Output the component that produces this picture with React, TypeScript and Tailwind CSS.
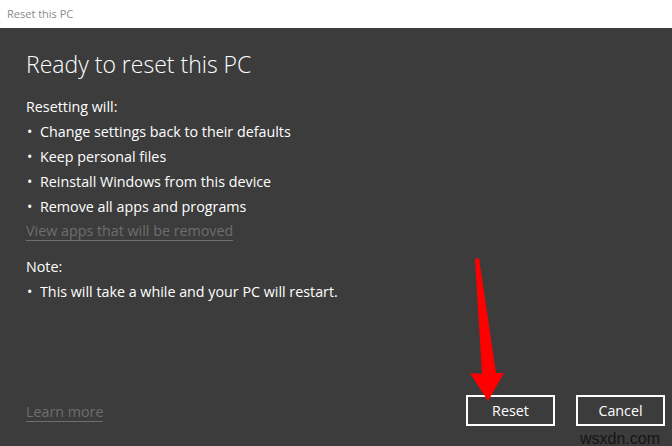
const items = [
  "Change settings back to their defaults",
  "Keep personal files",
  "Reinstall Windows from this device",
  "Remove all apps and programs",
];

const Bullet = ({ text }: { text: string }) => (
  <li className="flex h-[25px] items-center">
    <span className="w-[14px] pl-[1px]">•</span>
    <span>{text}</span>
  </li>
);

export default function App() {
  return (
    <div
      className="relative flex h-[446px] w-[672px] flex-col overflow-hidden bg-[#3c3c3c] text-white"
      style={{ fontFamily: '"Open Sans", "Noto Sans", sans-serif' }}
    >
      <div className="flex h-[28px] items-center bg-white pl-[7px] text-[11px] text-[#8a8a8a]">
        Reset this PC
      </div>

      <div className="flex flex-1 flex-col pl-[26px] pr-[7px]">
        <h1 className="pt-[20px] text-[23px] font-light leading-[32px]">Ready to reset this PC</h1>

        <div className="mt-[14px] text-[14.3px]">
          <p className="flex h-[25px] items-center">Resetting will:</p>
          <ul>
            {items.map((t) => (
              <Bullet key={t} text={t} />
            ))}
          </ul>
          <a className="flex h-[25px] items-center">
            <span className="border-b border-[#6e6e6e] leading-[18px] text-[#6e6e6e]">
              View apps that will be removed
            </span>
          </a>
          <p className="mt-[10px] flex h-[25px] items-center">Note:</p>
          <ul>
            <Bullet text="This will take a while and your PC will restart." />
          </ul>
        </div>

        <div className="mt-auto flex items-end justify-between pb-[20px]">
          <a className="mb-[4px] border-b border-[#6e6e6e] text-[14.3px] leading-[18px] text-[#6e6e6e]">
            Learn more
          </a>
          <div className="flex gap-[21px]">
            <button className="h-[31px] w-[89px] border-2 border-white text-[14.3px]">Reset</button>
            <button className="h-[31px] w-[89px] border-2 border-white text-[14.3px]">Cancel</button>
          </div>
        </div>
      </div>

      <svg className="absolute left-0 top-0" width="672" height="446" viewBox="0 0 672 446">
        <polygon
          points="475,259 479,258 496,373 504,373 488,401 470,373 482,374"
          fill="#ff0000"
        />
      </svg>

      <span
        className="absolute bottom-0 right-[12px] text-[16px] leading-[15px] text-[#141414]"
        style={{ fontFamily: '"Liberation Sans", Arial, sans-serif' }}
      >
        wsxdn.com
      </span>
    </div>
  );
}
